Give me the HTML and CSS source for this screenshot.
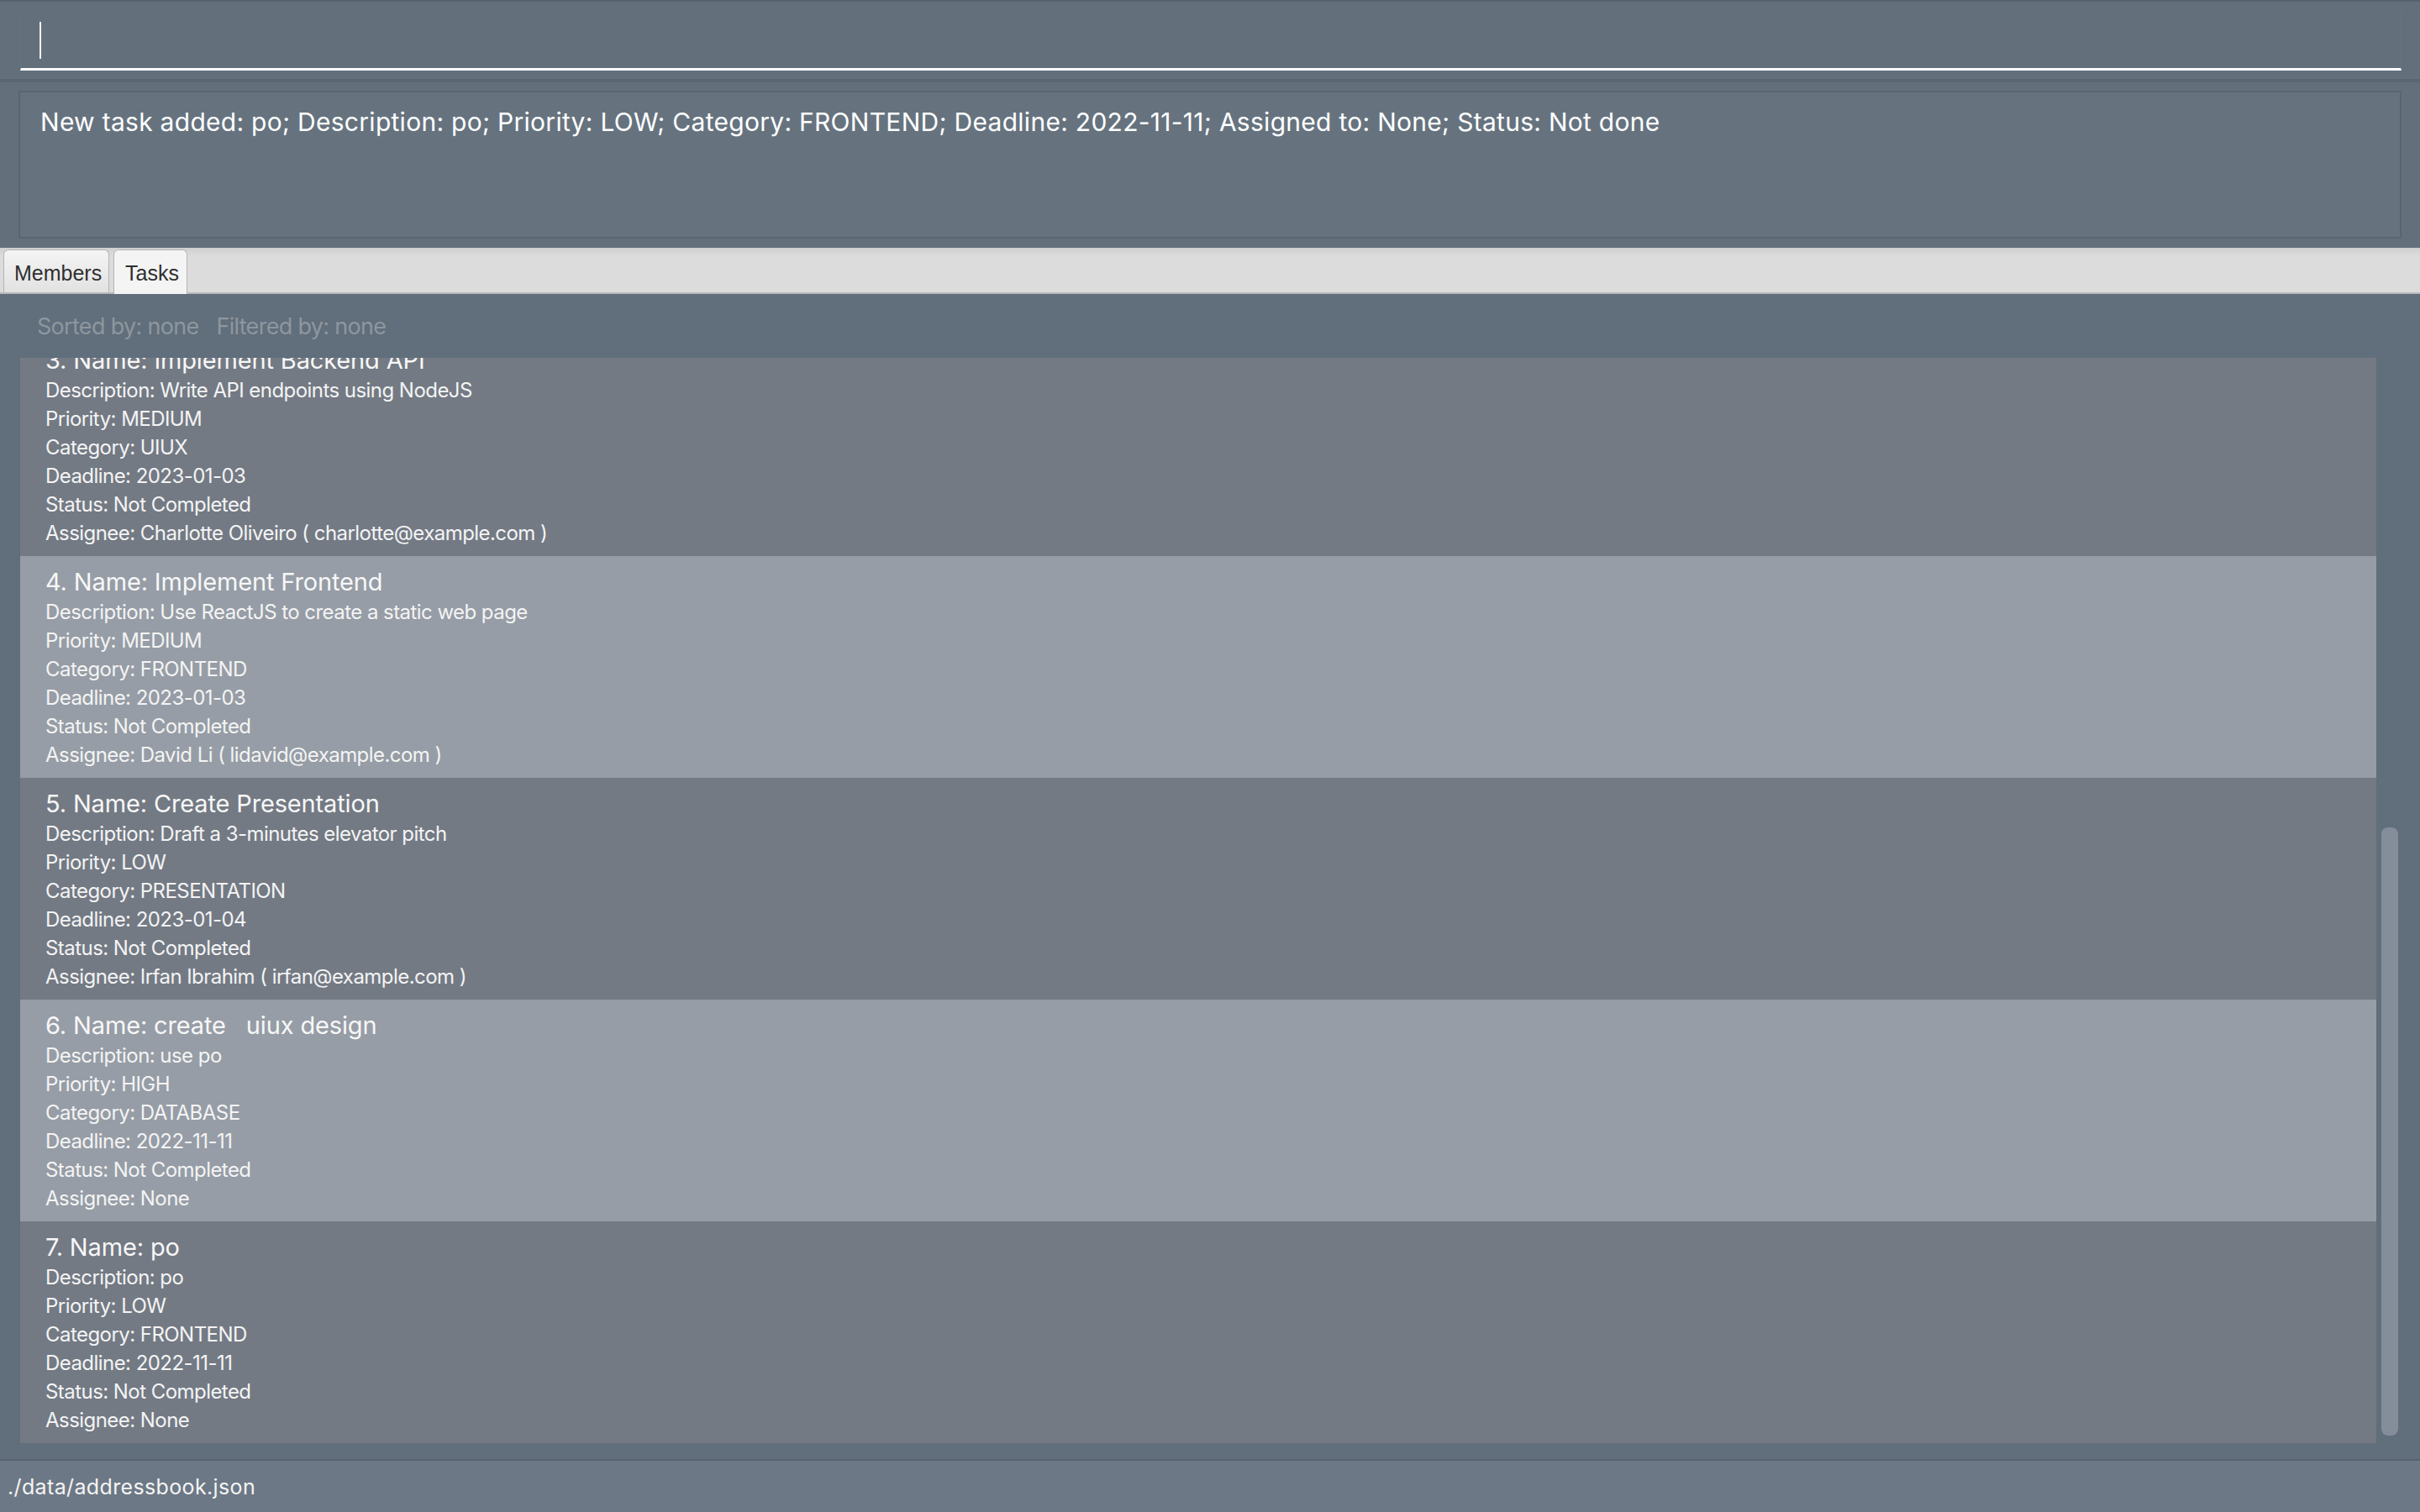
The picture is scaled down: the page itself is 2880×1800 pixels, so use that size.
FILE: index.html
```html
<!DOCTYPE html>
<html lang="en">
<head>
<meta charset="utf-8">
<title>Task Book</title>
<link rel="stylesheet" href="styles.css">
</head>
<body>
<div class="app">
  <section class="command-pane">
    <div class="command-field"><span class="caret"></span></div>
  </section>
  <section class="result-pane">
    <div class="result-box">New task added: po; Description: po; Priority: LOW; Category: FRONTEND; Deadline: 2022-11-11; Assigned to: None; Status: Not done</div>
  </section>
  <nav class="tabbar">
    <div class="tab">Members</div>
    <div class="tab tab-selected">Tasks</div>
  </nav>
  <section class="list-pane">
    <div class="list-meta"><span>Sorted by: none</span><span>Filtered by: none</span></div>
    <div class="list-view">
      <div class="cells">
        <div class="cells-inner">
          <div class="cell">
            <div class="cell-name">3. Name: Implement Backend API</div>
            <div class="cell-line">Description: Write API endpoints using NodeJS</div>
            <div class="cell-line">Priority: MEDIUM</div>
            <div class="cell-line">Category: UIUX</div>
            <div class="cell-line">Deadline: 2023-01-03</div>
            <div class="cell-line">Status: Not Completed</div>
            <div class="cell-line">Assignee: Charlotte Oliveiro ( charlotte@example.com )</div>
          </div>
          <div class="cell cell-alt">
            <div class="cell-name">4. Name: Implement Frontend</div>
            <div class="cell-line">Description: Use ReactJS to create a static web page</div>
            <div class="cell-line">Priority: MEDIUM</div>
            <div class="cell-line">Category: FRONTEND</div>
            <div class="cell-line">Deadline: 2023-01-03</div>
            <div class="cell-line">Status: Not Completed</div>
            <div class="cell-line">Assignee: David Li ( lidavid@example.com )</div>
          </div>
          <div class="cell">
            <div class="cell-name">5. Name: Create Presentation</div>
            <div class="cell-line">Description: Draft a 3-minutes elevator pitch</div>
            <div class="cell-line">Priority: LOW</div>
            <div class="cell-line">Category: PRESENTATION</div>
            <div class="cell-line">Deadline: 2023-01-04</div>
            <div class="cell-line">Status: Not Completed</div>
            <div class="cell-line">Assignee: Irfan Ibrahim ( irfan@example.com )</div>
          </div>
          <div class="cell cell-alt">
            <div class="cell-name">6. Name: create&nbsp;&nbsp; uiux design</div>
            <div class="cell-line">Description: use po</div>
            <div class="cell-line">Priority: HIGH</div>
            <div class="cell-line">Category: DATABASE</div>
            <div class="cell-line">Deadline: 2022-11-11</div>
            <div class="cell-line">Status: Not Completed</div>
            <div class="cell-line">Assignee: None</div>
          </div>
          <div class="cell">
            <div class="cell-name">7. Name: po</div>
            <div class="cell-line">Description: po</div>
            <div class="cell-line">Priority: LOW</div>
            <div class="cell-line">Category: FRONTEND</div>
            <div class="cell-line">Deadline: 2022-11-11</div>
            <div class="cell-line">Status: Not Completed</div>
            <div class="cell-line">Assignee: None</div>
          </div>
        </div>
      </div>
      <div class="scroll-track"><div class="scroll-thumb"></div></div>
    </div>
  </section>
  <footer class="status-bar">./data/addressbook.json</footer>
</div>
</body>
</html>
```

FILE: styles.css
```css
html, body {
  margin: 0;
  padding: 0;
}

body {
  background: #616e7b;
  font-family: "Inter", "Roboto", "Liberation Sans", sans-serif;
  color: #f3f3f3;
}

.app {
  width: 2880px;
  height: 1800px;
  display: flex;
  flex-direction: column;
  overflow: hidden;
}

/* command box */
.command-pane {
  box-sizing: border-box;
  height: 98px;
  flex: none;
  background: #63707c;
  border-top: 2px solid #56626e;
  border-bottom: 4px solid #5a6672;
  padding: 11px 22px 0 24px;
}

.command-field {
  box-sizing: border-box;
  height: 71px;
  border: 1px solid #66737f;
  border-bottom: 3px solid #ffffff;
  padding: 12px 0 0 22px;
}

.caret {
  display: block;
  width: 2px;
  height: 44px;
  background: #f2f2f2;
}

/* result display */
.result-pane {
  box-sizing: border-box;
  height: 197px;
  flex: none;
  background: #63707c;
  padding: 10px 22px 11px 22px;
}

.result-box {
  box-sizing: border-box;
  height: 176px;
  background: #66737f;
  border: 2px solid #5a6570;
  padding: 17px 0 0 24px;
  font-size: 30px;
  line-height: 36px;
  letter-spacing: 0.28px;
  color: #ffffff;
}

/* tabs */
.tabbar {
  box-sizing: border-box;
  height: 55px;
  flex: none;
  background: linear-gradient(#cfcfcf, #dcdcdc 18%, #dcdcdc);
  border-bottom: 2px solid #b9b9b9;
  display: flex;
  align-items: flex-end;
  gap: 5px;
  padding-left: 4px;
}

.tab {
  box-sizing: border-box;
  height: 51px;
  width: 126px;
  border: 1px solid #b5b5b5;
  border-bottom: none;
  border-radius: 6px 6px 0 0;
  background: linear-gradient(#f4f4f4, #e2e2e2);
  font-family: "Liberation Sans", Arial, sans-serif;
  font-size: 25px;
  color: #2f2f2f;
  padding: 13px 0 0 12px;
}

.tab-selected {
  width: 88px;
  height: 53px;
  margin-bottom: -2px;
  background: #f4f4f4;
  padding-left: 13px;
}

/* list */
.list-pane {
  flex: 1;
  min-height: 0;
  box-sizing: border-box;
  background: #616e7b;
  padding: 23px 22px 19px 24px;
  display: flex;
  flex-direction: column;
}

.list-meta {
  height: 32px;
  font-size: 27px;
  line-height: 32px;
  letter-spacing: -0.7px;
  color: #8d979f;
  padding-left: 20px;
  display: flex;
  gap: 21px;
  flex: none;
}

.list-view {
  margin-top: 21px;
  flex: 1;
  min-height: 0;
  display: flex;
}

.cells {
  flex: 1;
  overflow: hidden;
}

.cells-inner {
  margin-top: -28px;
}

.cell {
  box-sizing: border-box;
  height: 264px;
  background: #737a84;
  padding: 12px 0 0 30px;
  color: #f4f4f4;
}

.cell-alt {
  background: #969da6;
}

.cell-name {
  font-size: 29px;
  line-height: 38px;
  letter-spacing: -0.15px;
  color: #f7f7f7;
  white-space: pre;
}

.cell-line {
  font-size: 24px;
  line-height: 34px;
  letter-spacing: -0.55px;
}

.scroll-track {
  width: 30px;
  flex: none;
  box-sizing: border-box;
  padding: 559px 4px 0 6px;
}

.scroll-thumb {
  height: 724px;
  border-radius: 8px;
  background: #838e9a;
}

/* status bar */
.status-bar {
  box-sizing: border-box;
  height: 63px;
  flex: none;
  background: #6c7885;
  border-top: 2px solid #58636e;
  padding: 16px 0 0 9px;
  font-size: 25px;
  line-height: 30px;
  letter-spacing: 0.36px;
  color: #f4f4f4;
}
```
